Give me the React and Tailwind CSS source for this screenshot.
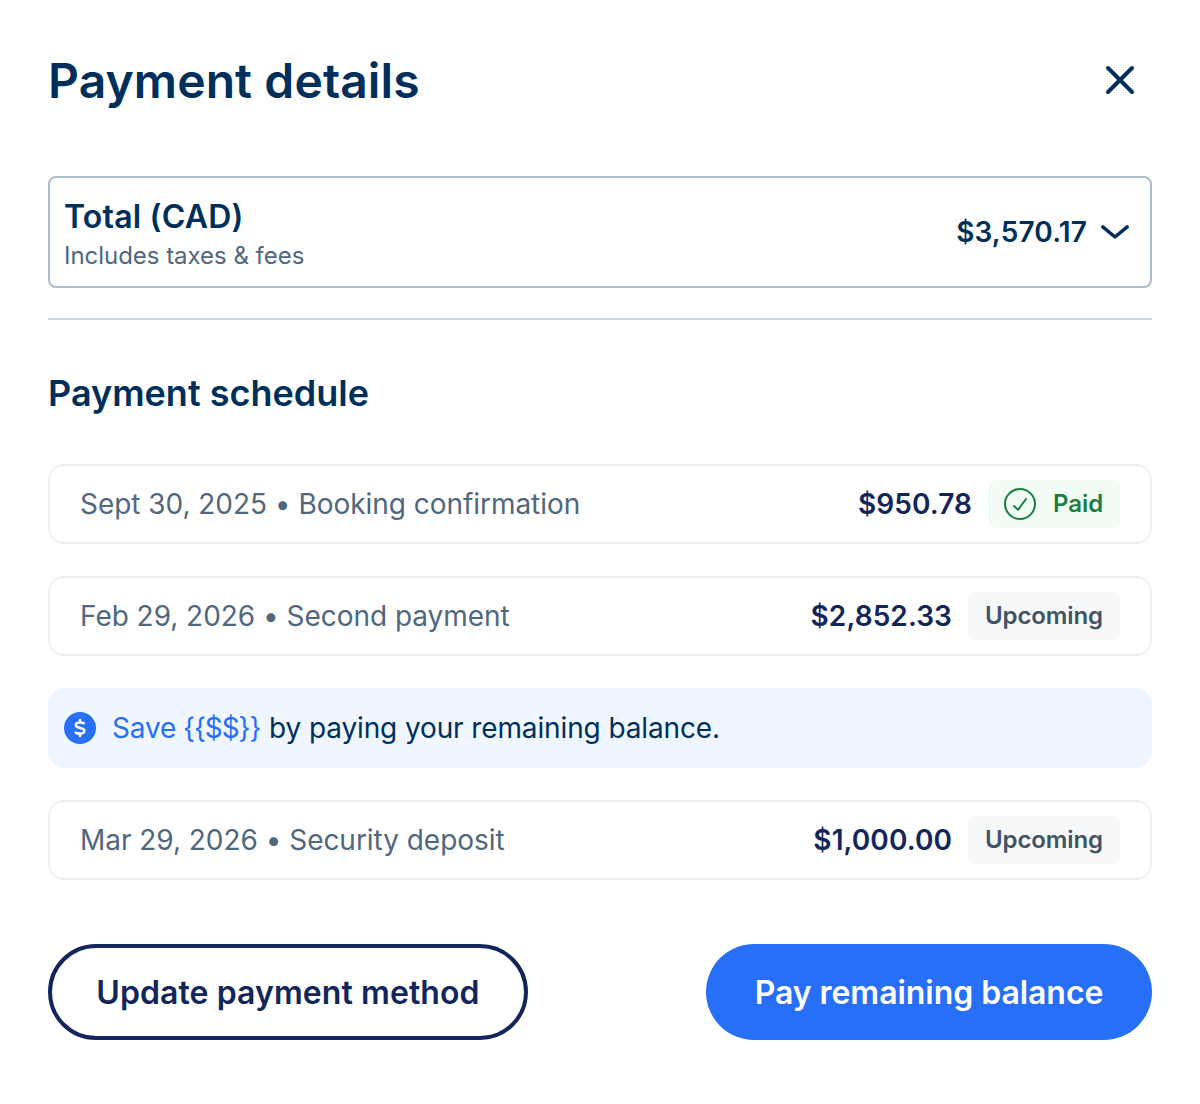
import { useState } from 'react'

const PAYMENTS = [
  { date: 'Sept 30, 2025', label: 'Booking confirmation', amount: '$950.78', status: 'paid' },
  { date: 'Feb 29, 2026', label: 'Second payment', amount: '$2,852.33', status: 'upcoming' },
  { date: 'Mar 29, 2026', label: 'Security deposit', amount: '$1,000.00', status: 'upcoming' },
]

function StatusBadge({ status }) {
  if (status === 'paid') {
    return (
      <span className="flex h-12 w-[132px] items-center rounded-lg bg-[#f1fcf5] pl-4 text-[24px] font-semibold text-[#1c7d43]">
        <svg className="mr-[17px] h-8 w-8" viewBox="0 0 32 32" fill="none" stroke="currentColor" strokeWidth="2" strokeLinecap="round" strokeLinejoin="round">
          <circle cx="16" cy="16" r="15" />
          <path d="M10 18L14 21.8L22 11" />
        </svg>
        Paid
      </span>
    )
  }
  return (
    <span className="flex h-12 w-[152px] items-center justify-center rounded-lg bg-[#f6f8fa] text-[24px] font-semibold tracking-[-0.1px] text-[#435362]">
      Upcoming
    </span>
  )
}

function PaymentRow({ payment }) {
  return (
    <li className="flex h-20 items-center justify-between rounded-2xl border-2 border-[#ebeef2] px-[30px]">
      <span className="text-[28px] tracking-[-0.04px] text-[#50677d]">
        {payment.date} • {payment.label}
      </span>
      <div className="flex items-center gap-4">
        <span className="text-[28px] font-semibold tracking-[0.08px] text-[#13265c]">{payment.amount}</span>
        <StatusBadge status={payment.status} />
      </div>
    </li>
  )
}

export default function App() {
  const [open, setOpen] = useState(false)

  return (
    <main className="h-[1104px] w-[1200px] bg-white px-12 pt-12 font-[Inter,sans-serif] text-[#002f5c]">
      <header className="flex h-16 items-center justify-between pr-4">
        <h1 className="pt-0.5 text-[48px] font-semibold tracking-[0.1px]">Payment details</h1>
        <button aria-label="Close">
          <svg className="h-8 w-8" viewBox="0 0 32 32" fill="none" stroke="currentColor" strokeWidth="4" strokeLinecap="round">
            <path d="M4 4L28 28M28 4L4 28" />
          </svg>
        </button>
      </header>

      <button
        onClick={() => setOpen(!open)}
        className="mt-16 flex h-28 w-full items-center justify-between rounded-lg border-2 border-[#adbccd] pr-5 pl-3.5 text-left"
      >
        <span className="flex flex-col pt-1.5">
          <span className="text-[32px] leading-[40px] font-semibold tracking-[0.2px]">Total (CAD)</span>
          <span className="pt-px text-[24px] leading-[36px] tracking-[-0.03px] text-[#50677d]">Includes taxes &amp; fees</span>
        </span>
        <span className="flex items-center gap-[13px]">
          <span className="text-[28px] font-semibold tracking-[0.15px]">$3,570.17</span>
          <svg className="h-4 w-[30px]" viewBox="0 0 30 16" fill="none" stroke="currentColor" strokeWidth="3.5" strokeLinecap="round" strokeLinejoin="round">
            <path d="M2.8 2.8L15 13L27.2 2.8" />
          </svg>
        </span>
      </button>

      <hr className="mt-[30px] border-t-2 border-[#ccd5e0]" />

      <h2 className="mt-[49px] text-[36px] leading-[48px] font-semibold">Payment schedule</h2>

      <ul className="mt-[47px] flex flex-col gap-8">
        <PaymentRow payment={PAYMENTS[0]} />
        <PaymentRow payment={PAYMENTS[1]} />
        <li className="flex h-20 items-center gap-4 rounded-2xl bg-[#eff6ff] px-4 text-[28px]">
          <svg className="h-8 w-8" viewBox="0 0 32 32" fill="none" stroke="white" strokeWidth="2.5" strokeLinecap="round" strokeLinejoin="round">
            <circle cx="16" cy="16" r="16" fill="#276ef9" stroke="none" />
            <path d="M16 8V10.5M16 21.5V24M19.7 11.2C18.8 10.7 17.6 10.4 16.2 10.4C13.6 10.4 11.8 11.4 11.8 13.1C11.8 16.9 20.4 15 20.4 18.8C20.4 20.6 18.6 21.6 16 21.6C14.3 21.6 12.7 21.3 11.6 20.6" />
          </svg>
          <span className="tracking-[-0.12px]">
            <span className="text-[#276ef9]">
              Save <span className="-ml-px tracking-[-1.08px]">{'{{$$}}'}</span>
            </span>{' '}
            <span className="ml-px">by paying your remaining balance.</span>
          </span>
        </li>
        <PaymentRow payment={PAYMENTS[2]} />
      </ul>

      <footer className="mt-16 flex items-center justify-between text-[32px] font-semibold">
        <button className="h-24 w-[480px] rounded-full border-4 border-[#13265c] pt-0.5 tracking-[0.08px] text-[#13265c]">
          Update payment method
        </button>
        <button className="h-24 w-[446px] rounded-full bg-[#276ef9] pt-0.5 tracking-[-0.05px] text-white">
          Pay remaining balance
        </button>
      </footer>
    </main>
  )
}
